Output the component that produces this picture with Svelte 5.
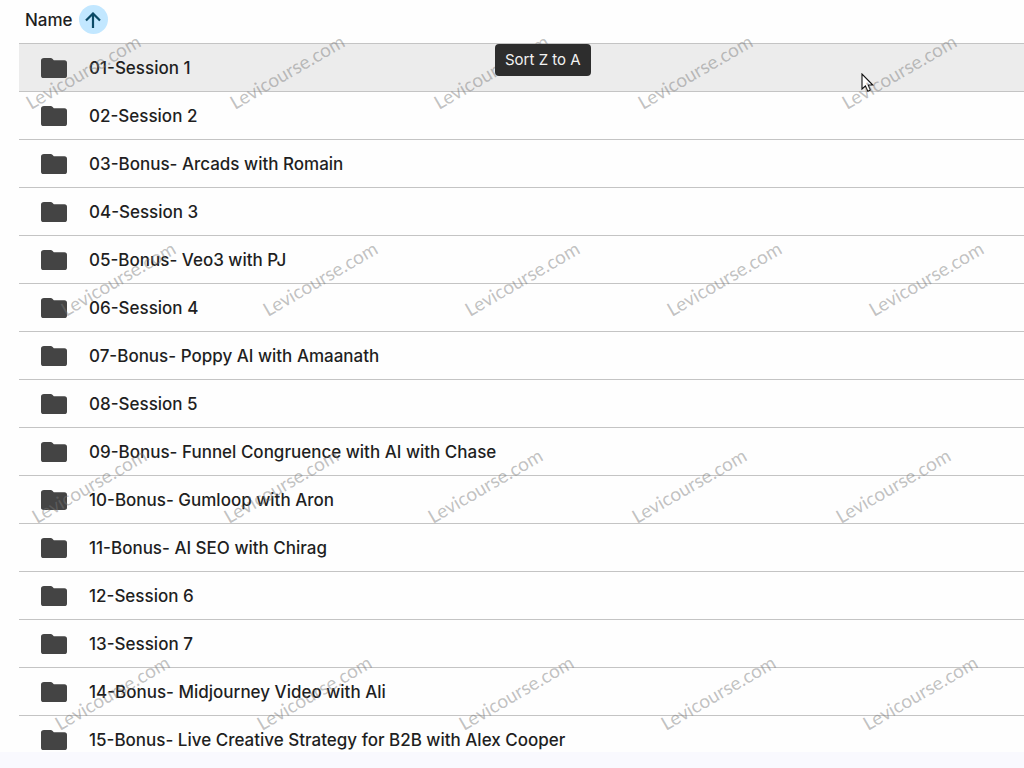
<script lang="ts">
	interface Mark {
		x: number
		y: number
	}

	const folders: string[] = [
		'01-Session 1',
		'02-Session 2',
		'03-Bonus- Arcads with Romain',
		'04-Session 3',
		'05-Bonus- Veo3 with PJ',
		'06-Session 4',
		'07-Bonus- Poppy AI with Amaanath',
		'08-Session 5',
		'09-Bonus- Funnel Congruence with AI with Chase',
		'10-Bonus- Gumloop with Aron',
		'11-Bonus- AI SEO with Chirag',
		'12-Session 6',
		'13-Session 7',
		'14-Bonus- Midjourney Video with Ali',
		'15-Bonus- Live Creative Strategy for B2B with Alex Cooper'
	];

	const markRows = [
		{ y: 110, xs: [31, 235, 439, 643, 847] },
		{ y: 317, xs: [66, 268, 470, 672, 874] },
		{ y: 524, xs: [37, 229, 433, 637, 841] },
		{ y: 731, xs: [60, 262, 464, 666, 868] }
	];

	const marks: Mark[] = markRows.flatMap(row => row.xs.map(x => ({ x, y: row.y })));

	let descending = $state(false);
	let rows = $derived(descending ? [...folders].reverse() : folders);
</script>

<main>
	<table>
		<thead>
			<tr>
				<th aria-sort={descending ? 'descending' : 'ascending'}>
					<div class="heading">
						<span>Name</span>
						<button
							class:descending
							aria-label="Reverse sort direction"
							aria-describedby="sort-tip"
							onclick={() => descending = !descending}
						>
							<svg width="16" height="16" viewBox="0 0 16 16" aria-hidden="true">
								<path d="M8 16V2M1 8.5L8 1.5L15 8.5" />
							</svg>
						</button>
					</div>
				</th>
			</tr>
		</thead>
		<tbody>
			{#each rows as name, i}
				<tr class:active={i === 0}>
					<td>
						<a href="#{name.slice(0, 2)}">
							<svg width="26" height="20" viewBox="0 0 26 20" aria-hidden="true">
								<path d="M3 0H9.6Q10.8 0 11.4 .8L12.8 2.2H23.4Q26 2.2 26 4.8V17.4Q26 20 23.4 20H2.6Q0 20 0 17.4V2.6Q0 0 3 0Z" />
							</svg>
							<span>{name}</span>
						</a>
					</td>
				</tr>
			{/each}
		</tbody>
	</table>
	<svg class="cursor" width="14" height="20" viewBox="0 0 14 20" aria-hidden="true">
		<path d="M1 1V16L4.4 13L6.8 18.2L9.4 17L7.2 12H11.8Z" />
	</svg>
	<svg class="marks" aria-hidden="true">
		{#each marks as mark}
			<text transform="translate({mark.x} {mark.y}) rotate(-30)">Levicourse.com</text>
		{/each}
	</svg>
	<div class="tooltip" id="sort-tip" role="tooltip">Sort {descending ? 'A to Z' : 'Z to A'}</div>
</main>
<footer></footer>

<style>
	:global(body) {
		background: #fefefe;
		overflow: hidden;
	}

	main {
		position: relative;
		padding-left: 19px;
		overflow: hidden;
		font-family: Inter, Roboto, sans-serif;
		font-size: 17px;
		color: #1f1f1f;
	}

	table {
		width: 100%;
		border-collapse: separate;
		border-spacing: 0;
	}

	th,
	td {
		padding: 0;
		border-bottom: 1px solid #c4c4c4;
		text-align: left;
		font-weight: 500;
	}

	.heading {
		display: flex;
		align-items: center;
		gap: 6px;
		height: 39px;
		padding: 0 0 4px 6px;
	}

	button {
		display: grid;
		place-items: center;
		width: 29px;
		height: 29px;
		padding: 0;
		border: 0;
		border-radius: 50%;
		background: #c2e7ff;
		cursor: pointer;
	}

	button path {
		fill: none;
		stroke: #0b4a66;
		stroke-width: 2.2;
	}

	.descending svg {
		transform: rotate(180deg);
	}

	td a {
		display: flex;
		align-items: center;
		gap: 22px;
		height: 47px;
		padding-left: 22px;
		color: inherit;
		text-decoration: none;
	}

	td path {
		fill: #444;
	}

	.active td {
		background: #ececec;
	}

	.tooltip {
		position: absolute;
		top: 44px;
		left: 495px;
		padding: 0 10px;
		border-radius: 4px;
		background: #2d2d2d;
		color: #f2f2f2;
		font-size: 15px;
		line-height: 32px;
		white-space: nowrap;
	}

	.marks {
		position: absolute;
		inset: 0;
		width: 100%;
		height: 100%;
		fill: #777;
		fill-opacity: 0.45;
		font-family: Lato, "Noto Sans", sans-serif;
		font-size: 19px;
		pointer-events: none;
	}

	.cursor {
		position: absolute;
		top: 73px;
		left: 861px;
		pointer-events: none;
	}

	.cursor path {
		fill: #fff;
		stroke: #111;
		stroke-width: 1.1;
	}

	footer {
		position: fixed;
		right: 0;
		bottom: 0;
		left: 0;
		height: 16px;
		background: #f9f9fe;
	}
</style>
